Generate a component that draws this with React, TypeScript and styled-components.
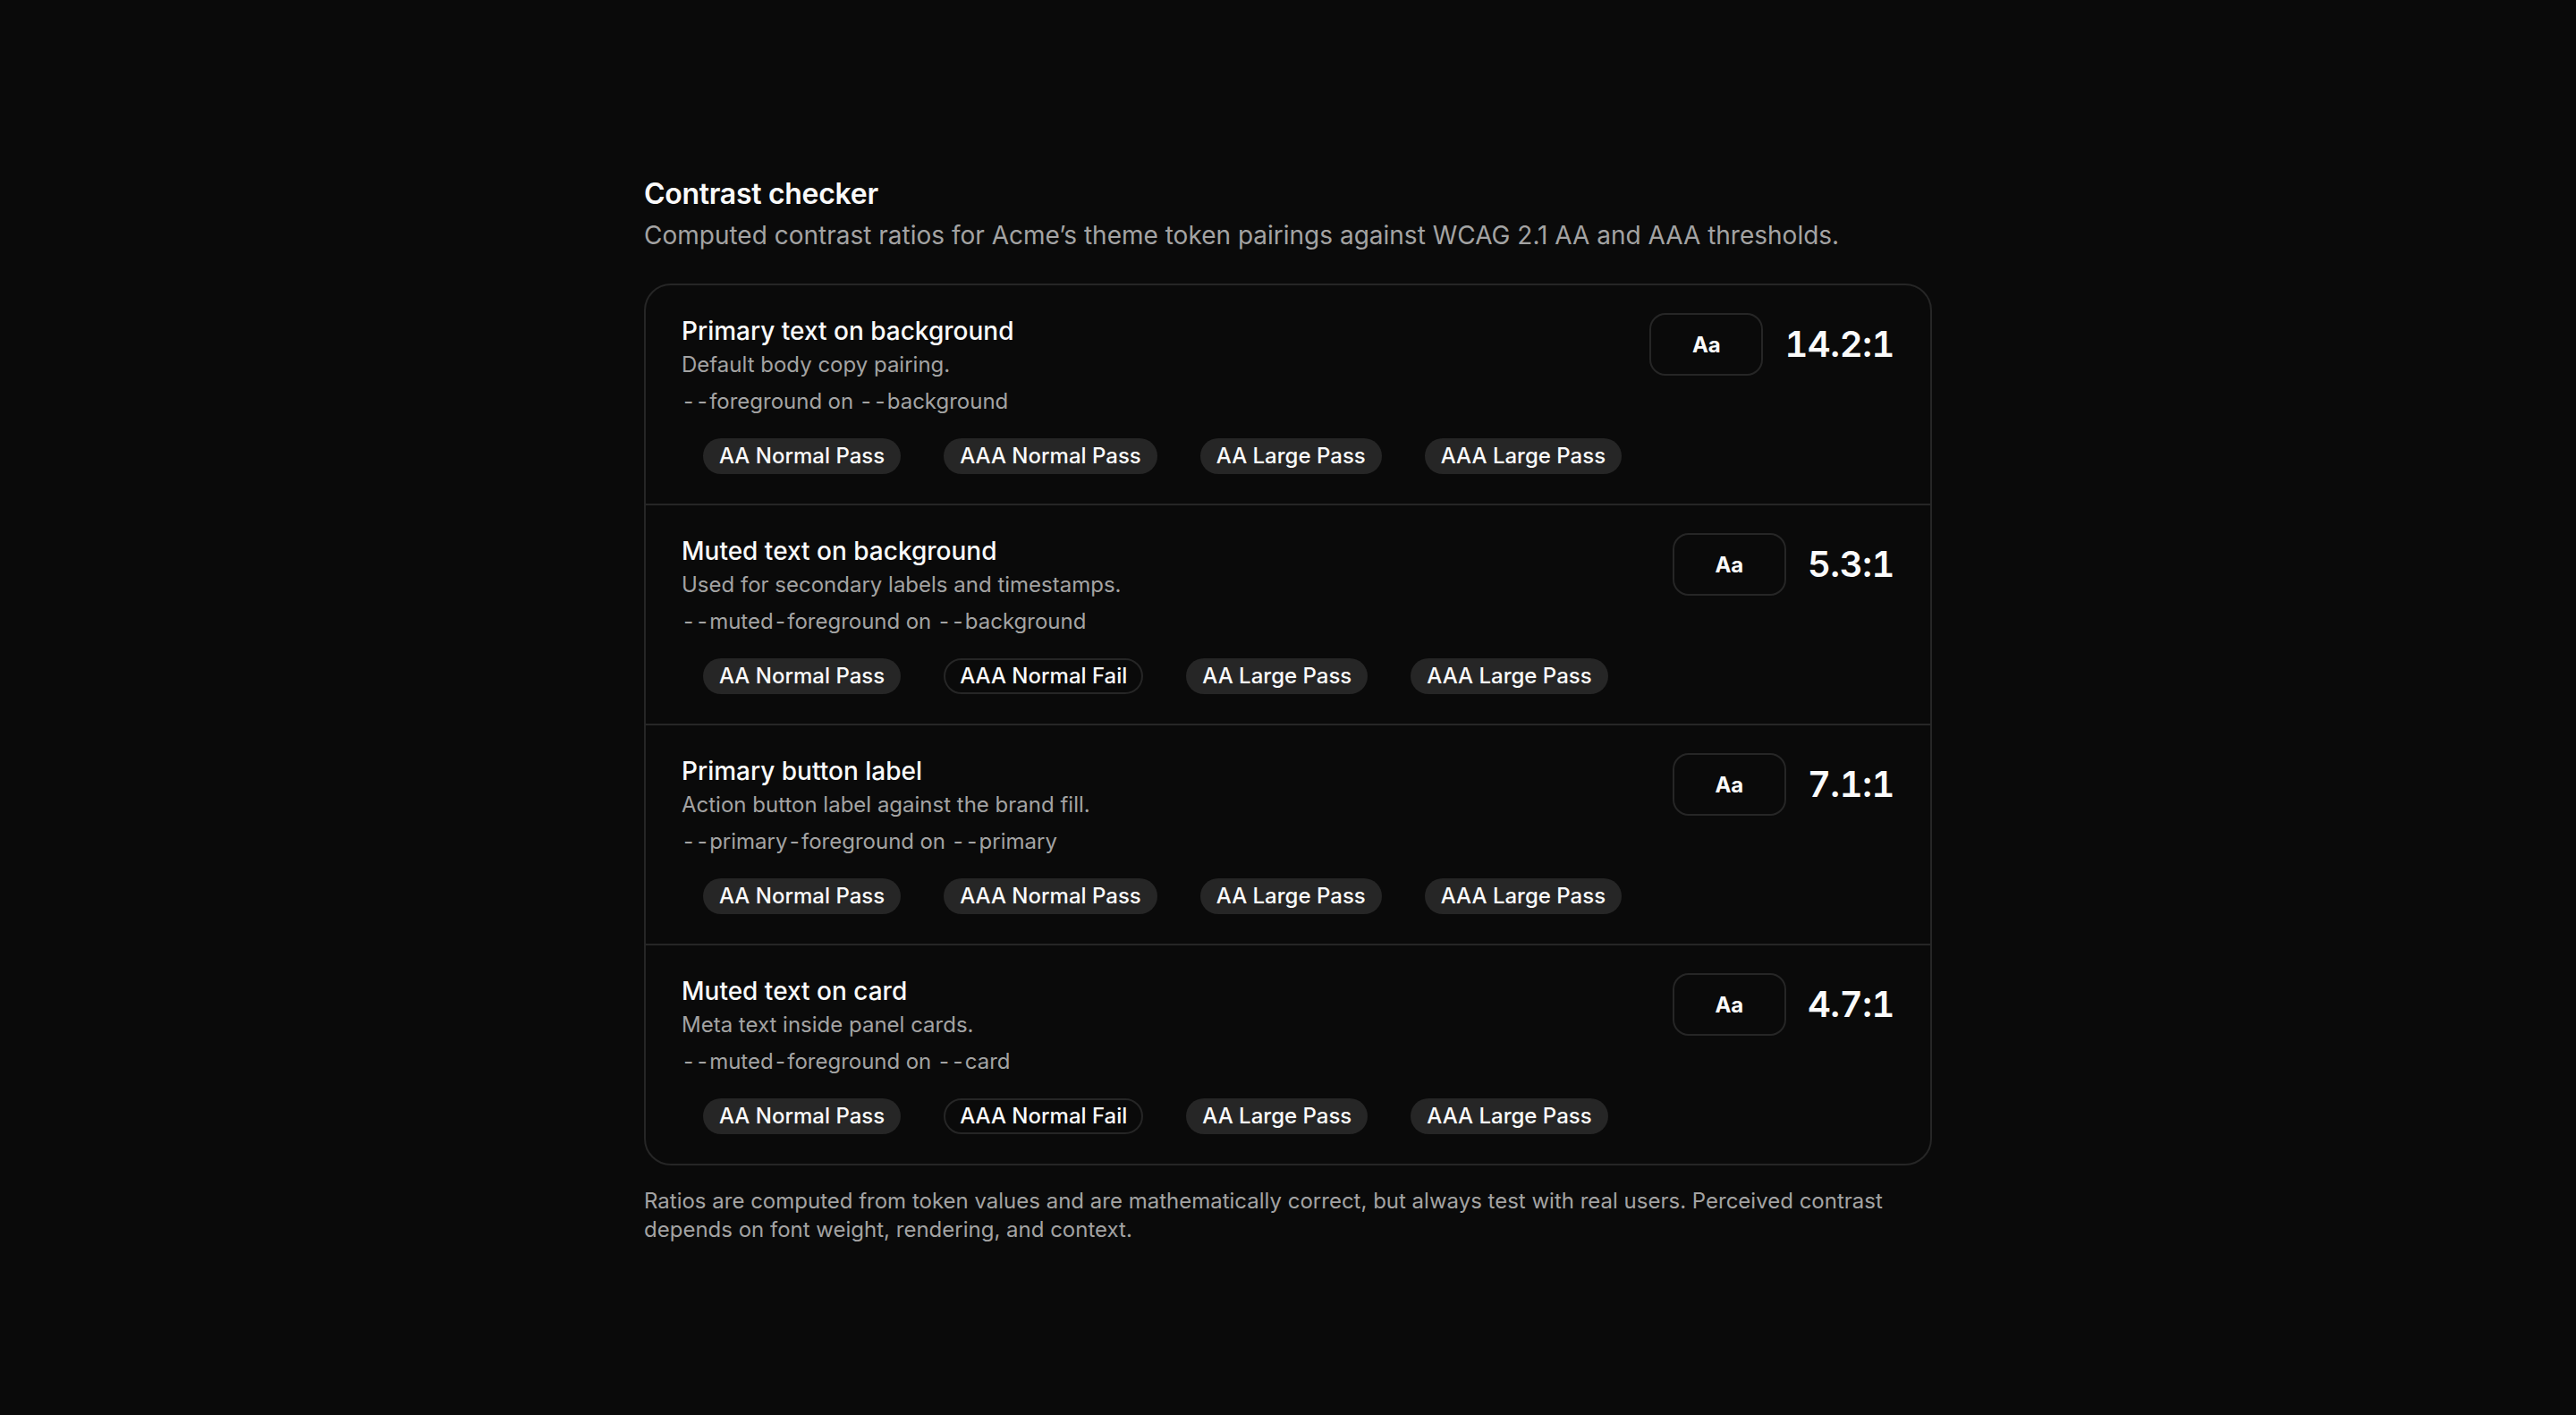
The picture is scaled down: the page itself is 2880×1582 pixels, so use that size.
import React from 'react';
import styled, { createGlobalStyle } from 'styled-components';

const GlobalStyle = createGlobalStyle`
  html, body {
    margin: 0;
    padding: 0;
    background: #0a0a0a;
  }
  body {
    font-family: Inter, "Noto Sans", sans-serif;
    color: #fafafa;
    -webkit-font-smoothing: antialiased;
  }
  * {
    box-sizing: border-box;
  }
`;

const Page = styled.main`
  min-height: 100vh;
  display: flex;
  align-items: center;
  justify-content: center;
  padding-top: 6px;
`;

const Section = styled.section`
  width: 1440px;
`;

const Heading = styled.h2`
  margin: 0;
  font-size: 32px;
  line-height: 40px;
  font-weight: 600;
  letter-spacing: -0.3px;
`;

const Lead = styled.p`
  margin: 6px 0 0;
  font-size: 28px;
  line-height: 40px;
  color: #a3a3a3;
`;

const Card = styled.div`
  margin-top: 34px;
  border: 2px solid #262626;
  border-radius: 30px;
  overflow: hidden;
`;

const Row = styled.div`
  display: flex;
  justify-content: space-between;
  align-items: flex-start;
  gap: 24px;
  padding: 31px 40px 33px;
  border-bottom: 2px solid #262626;

  &:last-child {
    border-bottom: none;
  }
`;

const Info = styled.div`
  flex: 1;
  display: flex;
  flex-direction: column;
  min-width: 0;
`;

const PairTitle = styled.h3`
  margin: 0;
  font-size: 28px;
  line-height: 40px;
  font-weight: 500;
`;

const PairNote = styled.p`
  margin: 2px 0 0;
  font-size: 24px;
  line-height: 32px;
  color: #a3a3a3;
`;

const Tokens = styled.code`
  margin-top: 9px;
  font-family: Inter, "Noto Sans", sans-serif;
  font-variant-numeric: tabular-nums;
  font-feature-settings: 'tnum' 1;
  font-size: 24px;
  line-height: 32px;
  color: #a3a3a3;
`;

const Badges = styled.ul`
  display: flex;
  flex-wrap: wrap;
  gap: 48px;
  margin: 25px 0 0;
  padding: 0 0 0 24px;
  list-style: none;
`;

const Badge = styled.li<{ $fail?: boolean }>`
  display: inline-flex;
  align-items: center;
  padding: 2px 16px;
  border-radius: 999px;
  border: 2px solid ${(p) => (p.$fail ? '#262626' : 'transparent')};
  background: ${(p) => (p.$fail ? 'transparent' : '#262626')};
  color: #fafafa;
  font-size: 24px;
  line-height: 32px;
  font-weight: 500;
  white-space: nowrap;
`;

const Side = styled.div`
  display: flex;
  align-items: center;
  gap: 24px;
  flex-shrink: 0;
`;

const Swatch = styled.div`
  width: 127px;
  height: 70px;
  display: flex;
  align-items: center;
  justify-content: center;
  border: 2px solid #262626;
  border-radius: 18px;
  background: #0a0a0a;
  color: #fafafa;
  font-size: 24px;
  font-weight: 700;
`;

const Ratio = styled.span`
  font-size: 40px;
  line-height: 48px;
  font-weight: 600;
  font-variant-numeric: tabular-nums;
  letter-spacing: -0.4px;
`;

const Footnote = styled.p`
  margin: 24px 0 0;
  font-size: 24px;
  line-height: 32px;
  color: #a3a3a3;
`;

type Check = { label: string; pass: boolean };

type Pairing = {
  title: string;
  note: string;
  fg: string;
  bg: string;
  ratio: string;
  checks: Check[];
};

const allPass: Check[] = [
  { label: 'AA Normal', pass: true },
  { label: 'AAA Normal', pass: true },
  { label: 'AA Large', pass: true },
  { label: 'AAA Large', pass: true },
];

const aaaNormalFails: Check[] = allPass.map((c) =>
  c.label === 'AAA Normal' ? { ...c, pass: false } : c
);

const pairings: Pairing[] = [
  {
    title: 'Primary text on background',
    note: 'Default body copy pairing.',
    fg: '--foreground',
    bg: '--background',
    ratio: '14.2:1',
    checks: allPass,
  },
  {
    title: 'Muted text on background',
    note: 'Used for secondary labels and timestamps.',
    fg: '--muted-foreground',
    bg: '--background',
    ratio: '5.3:1',
    checks: aaaNormalFails,
  },
  {
    title: 'Primary button label',
    note: 'Action button label against the brand fill.',
    fg: '--primary-foreground',
    bg: '--primary',
    ratio: '7.1:1',
    checks: allPass,
  },
  {
    title: 'Muted text on card',
    note: 'Meta text inside panel cards.',
    fg: '--muted-foreground',
    bg: '--card',
    ratio: '4.7:1',
    checks: aaaNormalFails,
  },
];

function PairingRow({ item }: { item: Pairing }) {
  return (
    <Row>
      <Info>
        <PairTitle>{item.title}</PairTitle>
        <PairNote>{item.note}</PairNote>
        <Tokens>
          {item.fg} on {item.bg}
        </Tokens>
        <Badges>
          {item.checks.map((c) => (
            <Badge key={c.label} $fail={!c.pass}>
              {c.label} {c.pass ? 'Pass' : 'Fail'}
            </Badge>
          ))}
        </Badges>
      </Info>
      <Side>
        <Swatch>Aa</Swatch>
        <Ratio>{item.ratio}</Ratio>
      </Side>
    </Row>
  );
}

export default function App() {
  return (
    <>
      <GlobalStyle />
      <Page>
        <Section>
          <Heading>Contrast checker</Heading>
          <Lead>
            Computed contrast ratios for Acme’s theme token pairings against WCAG 2.1 AA and AAA
            thresholds.
          </Lead>
          <Card>
            {pairings.map((p) => (
              <PairingRow key={p.title} item={p} />
            ))}
          </Card>
          <Footnote>
            Ratios are computed from token values and are mathematically correct, but always test
            with real users. Perceived contrast depends on font weight, rendering, and context.
          </Footnote>
        </Section>
      </Page>
    </>
  );
}
